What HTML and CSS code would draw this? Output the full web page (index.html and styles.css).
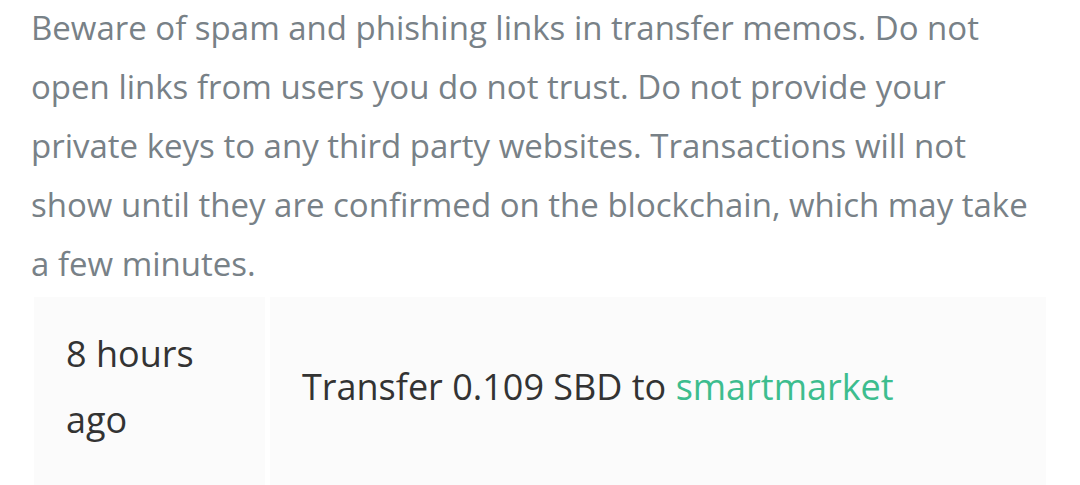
FILE: index.html
```html
<!DOCTYPE html>
<html>
<head>
<meta charset="utf-8">
<link rel="stylesheet" href="styles.css">
</head>
<body>
<div class="page">
  <p class="notice">Beware of spam and phishing links in transfer memos. Do not open links from users you do not trust. Do not provide your private keys to any third party websites. Transactions will not show until they are confirmed on the blockchain, which may take a few minutes.</p>
  <div class="history">
    <div class="row">
      <div class="cell time">8 hours ago</div>
      <div class="cell desc">Transfer 0.109 SBD to <a class="user" href="#">smartmarket</a></div>
    </div>
  </div>
</div>
</body>
</html>
```
FILE: styles.css
```css
html, body {
  margin: 0;
  padding: 0;
  background: #ffffff;
}
.page {
  width: 1012px;
  padding-left: 31px;
  font-family: "Open Sans", "Liberation Sans", sans-serif;
}
.notice {
  margin: -2px 0 0;
  font-size: 33px;
  line-height: 59px;
  color: #788187;
}
.history {
  margin: 4px 0 0 3px;
}
.row {
  display: grid;
  grid-template-columns: 231px 776px;
  gap: 5px;
}
.cell {
  background: #fbfbfb;
  padding: 24px 32px 40px;
  font-size: 36px;
  line-height: 66px;
  color: #333333;
}
.desc {
  padding-top: 57px;
}
.desc .user {
  color: #3dbd8e;
  text-decoration: none;
}
```
